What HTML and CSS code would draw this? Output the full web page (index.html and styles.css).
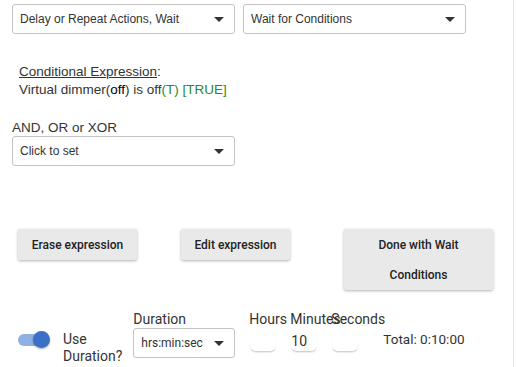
FILE: index.html
```html
<!DOCTYPE html>
<html lang="en">
<head>
    <meta charset="UTF-8">
    <title>Wait for Conditions</title>
    <link rel="stylesheet" href="styles.css">
</head>
<body>
    <div class="page">
        <div class="select-row">
            <div class="select wide">
                <span>Delay or Repeat Actions, Wait</span>
                <span class="caret"></span>
            </div>
            <div class="select wide">
                <span>Wait for Conditions</span>
                <span class="caret"></span>
            </div>
        </div>

        <div class="expression">
            <div><u>Conditional Expression</u>:</div>
            <div>Virtual dimmer(<span class="value">off</span>) is off<span class="truth">(T) [TRUE]</span></div>
        </div>

        <div class="operator">
            <div class="field-label">AND, OR or XOR</div>
            <div class="select wide">
                <span>Click to set</span>
                <span class="caret"></span>
            </div>
        </div>

        <div class="button-row">
            <button class="btn btn-erase">Erase expression</button>
            <button class="btn btn-edit">Edit expression</button>
            <button class="btn btn-done">Done with Wait Conditions</button>
        </div>

        <div class="duration-row">
            <div class="toggle">
                <span class="toggle-track"></span>
                <span class="toggle-thumb"></span>
            </div>
            <div class="toggle-label">Use<br>Duration?</div>
            <div class="duration-field">
                <div class="small-label">Duration</div>
                <div class="select narrow">
                    <span>hrs:min:sec</span>
                    <span class="caret"></span>
                </div>
            </div>
            <div class="time-field">
                <div class="small-label">Hours</div>
                <div class="time-input"></div>
            </div>
            <div class="time-field">
                <div class="small-label">Minutes</div>
                <div class="time-input">10</div>
            </div>
            <div class="time-field">
                <div class="small-label">Seconds</div>
                <div class="time-input"></div>
            </div>
            <div class="total">Total: 0:10:00</div>
        </div>
    </div>
</body>
</html>
```

FILE: styles.css
```css
* {
    margin: 0;
    padding: 0;
    box-sizing: border-box;
}

body {
    background-color: #fff;
    color: #333;
    font-family: "Liberation Sans", Arial, sans-serif;
    font-size: 13.5px;
}

.page {
    width: 514px;
    height: 367px;
    border-right: 1px solid #e4e4e4;
    padding: 4px 0 0 12px;
    overflow: hidden;
}

.select-row {
    display: flex;
    gap: 8px;
}

.select {
    display: flex;
    align-items: center;
    justify-content: space-between;
    height: 30px;
    padding: 0 10px 0 7px;
    border: 1px solid #c4c4c4;
    border-radius: 3px;
    font-size: 12px;
    color: #333;
    background-color: #fff;
}

.select.wide {
    width: 223px;
}

.select.narrow {
    width: 102px;
    height: 30px;
}

.caret {
    width: 0;
    height: 0;
    border-left: 5px solid transparent;
    border-right: 5px solid transparent;
    border-top: 5px solid #333;
}

.expression {
    margin-top: 29px;
    padding-left: 7px;
    line-height: 18px;
    color: #333;
}

.value {
    color: #000;
}

.truth {
    color: #2a872a;
}

.operator {
    margin-top: 21px;
}

.field-label {
    line-height: 16px;
}

.button-row {
    display: flex;
    align-items: flex-start;
    margin-top: 63px;
    padding-left: 6px;
}

.btn {
    font-family: Roboto, sans-serif;
    font-weight: 500;
    font-size: 12px;
    color: #222;
    background-color: #e9e9e9;
    border: none;
    border-radius: 2px;
    box-shadow: 0 1px 3px rgba(0, 0, 0, 0.3);
    height: 31px;
}

.btn-erase {
    width: 119px;
}

.btn-edit {
    width: 109px;
    margin-left: 44px;
}

.btn-done {
    width: 149px;
    height: 61px;
    margin-left: 54px;
    padding: 0 20px;
    line-height: 30px;
}

.duration-row {
    display: flex;
    align-items: flex-start;
    margin-top: 20px;
    padding-left: 6px;
    font-family: Roboto, sans-serif;
    color: #333;
}

.toggle {
    position: relative;
    width: 32px;
    height: 18px;
    margin-top: 21px;
}

.toggle-track {
    position: absolute;
    left: 0;
    top: 3px;
    width: 28px;
    height: 12px;
    border-radius: 6px;
    background-color: #8eb0e3;
}

.toggle-thumb {
    position: absolute;
    left: 15px;
    top: 0;
    width: 17px;
    height: 17px;
    border-radius: 50%;
    background-color: #3a70c8;
    box-shadow: 0 1px 2px rgba(0, 0, 0, 0.35);
}

.toggle-label {
    margin-left: 13px;
    margin-top: 21px;
    font-size: 14px;
    line-height: 17px;
}

.duration-field {
    margin-left: 11px;
}

.small-label {
    font-size: 14px;
    line-height: 18px;
}

.time-field {
    width: 41px;
}

.duration-field + .time-field {
    margin-left: 14px;
}

.time-input {
    width: 26px;
    height: 22px;
    margin-top: 2px;
    margin-left: 1px;
    border-bottom: 1px solid #d2d2d2;
    border-radius: 0 0 6px 6px;
    box-shadow: 0 1px 1px rgba(0, 0, 0, 0.08);
    font-size: 14px;
    line-height: 22px;
}

.total {
    margin-left: 11px;
    margin-top: 20px;
    font-size: 13.5px;
    line-height: 18px;
}
```
